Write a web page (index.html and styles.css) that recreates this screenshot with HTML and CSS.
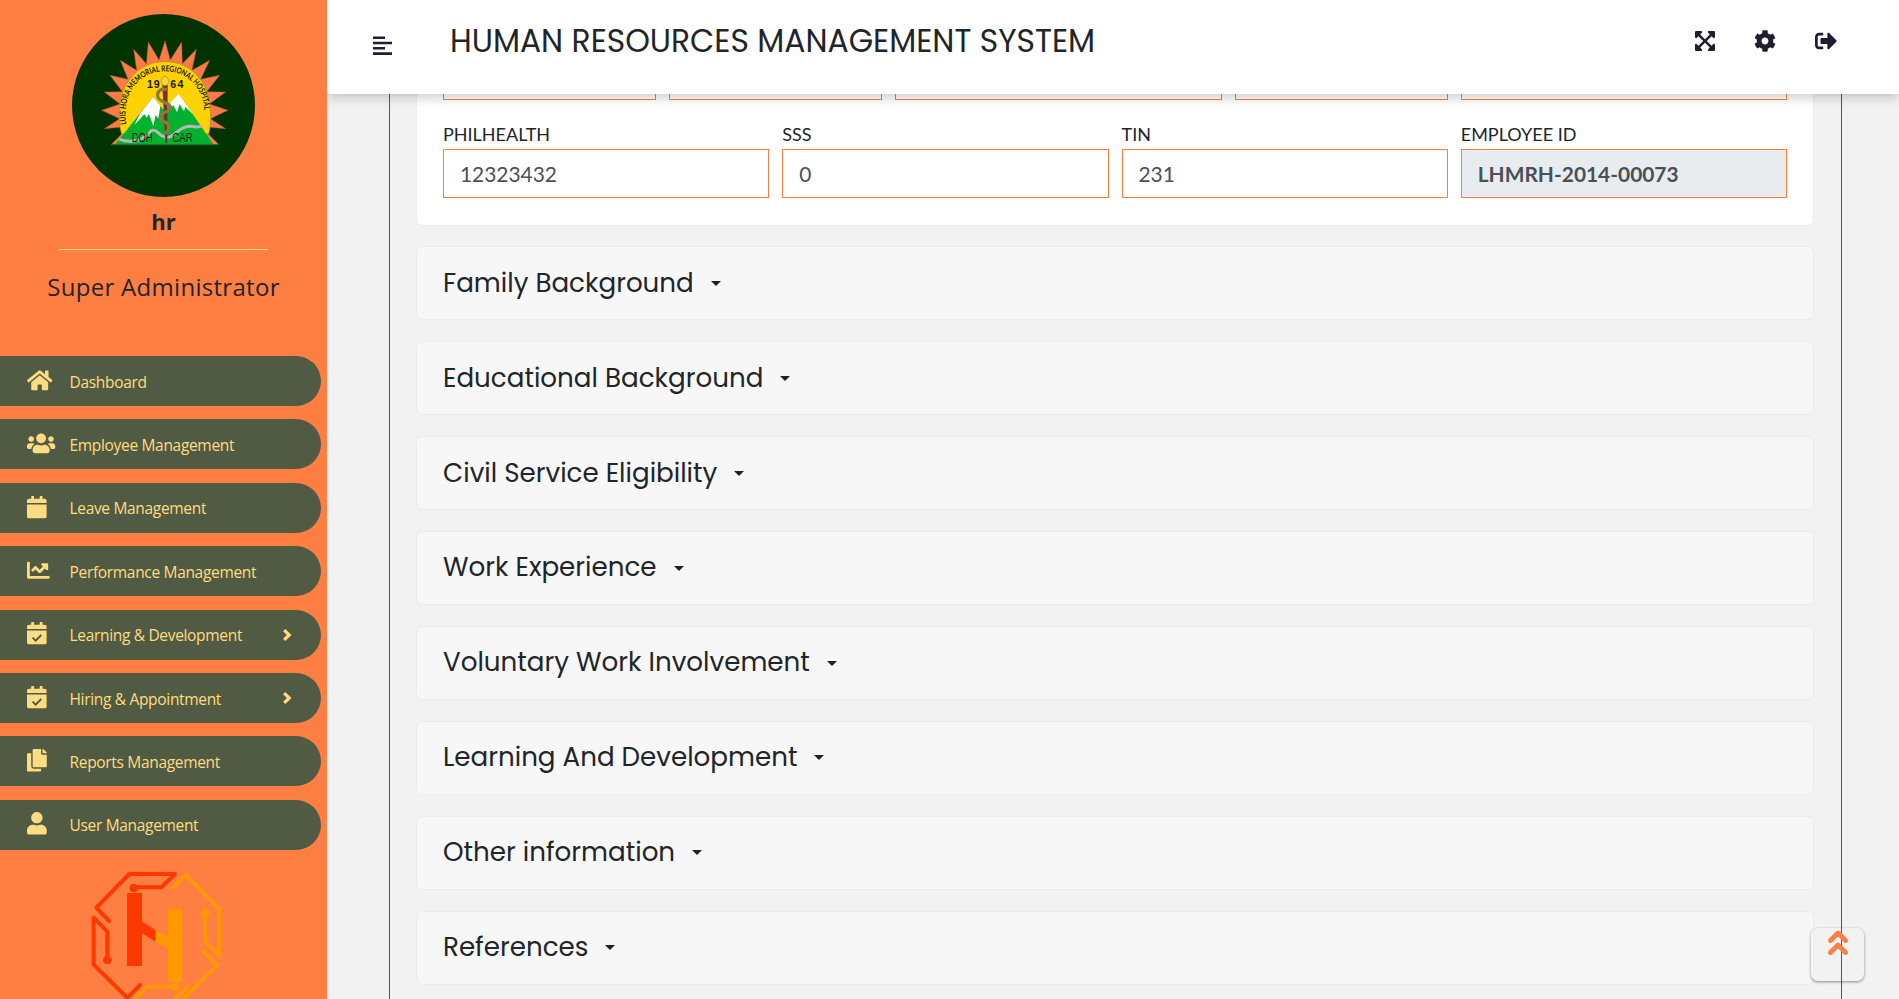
FILE: index.html
```html
<!DOCTYPE html>
<html lang="en">
<head>
<meta charset="utf-8">
<title>Human Resources Management System</title>
<link rel="stylesheet" href="styles.css">
</head>
<body>
<svg class="defs" width="0" height="0">
  <symbol id="i-calendar" viewBox="0 0 448 512"><path d="M12 192h424c6.600 0 12 5.400 12 12v260c0 26.500-21.500 48-48 48H48c-26.500 0-48-21.500-48-48V204c0-6.600 5.400-12 12-12zm436-44v-36c0-26.500-21.500-48-48-48h-48V12c0-6.600-5.400-12-12-12h-40c-6.600 0-12 5.400-12 12v52H160V12c0-6.600-5.400-12-12-12h-40c-6.600 0-12 5.400-12 12v52H48C21.500 64 0 85.500 0 112v36c0 6.600 5.400 12 12 12h424c6.600 0 12-5.400 12-12z"/></symbol>
  <symbol id="i-chevron" viewBox="0 0 10 14"><path d="M2.200 2.200 7.200 7l-5 4.800" fill="none" stroke="currentColor" stroke-width="3.200"/></symbol>
</svg>
<div class="app">
  <aside class="sidebar">
    <div class="profile">
      <svg class="seal" viewBox="216 42 549 549">
        <circle cx="490.500" cy="316.500" r="274.500" fill="#003300"/>
        <path d="M333 434 365 402 360 382 313 386 359 356 305 331 360 312 313 276 367 275 330 226 384 238 361 181 410 211 401 148 439 191 445 126 477 180 495 122 511 180 545 126 547 191 589 148 576 211 629 181 602 238 659 226 620 275 677 276 628 312 684 331 631 356 677 386 630 382 625 402 657 434Z" fill="#f97b4a" stroke="#a9552c" stroke-width="1.500"/>
        <path d="M365 402C355 370 357 335 360 312 370 240 420 185 495 185S620 240 629 312C633 345 633 375 626 402Z" fill="#ffd200" stroke="#92851c" stroke-width="1.500"/>
        <path d="M345 434 459 291 495 335 536 281 641 434Z" fill="#00b22d"/>
        <path d="M459 291 420 341 403 375 433 343 440 353 447 342 460 378 467 345 475 356 481 318ZM536 281 513 306 505 330 520 316 531 337 539 313 552 334 556 321 579 343Z" fill="#fff"/>
        <path d="M358 418C400 432 435 418 454 392 473 384 474 408 494 411 527 417 530 380 569 379 585 378 590 385 606 378" fill="none" stroke="#b8b8b8" stroke-width="9"/>
        <path d="M333 434H657" stroke="#08782d" stroke-width="3"/>
        <path d="M487 255H503L502 425 499 432 496 425Z" fill="#713037"/>
        <path d="M500 270C475 258 462 291 484 302 509 313 526 324 495 337 475 345 475 360 499 368 515 381 504 394 491 403" fill="none" stroke="#8a7a36" stroke-width="10"/>
        <ellipse cx="495" cy="243" rx="11" ry="14" fill="#f4d53b" stroke="#a48e13" stroke-width="2"/>
        <path id="arc" d="M379 373C364 281 417 214 495 214S626 281 611 373" fill="none"/>
        <text class="seal-arc"><textPath href="#arc" textLength="410" lengthAdjust="spacingAndGlyphs">LUIS HORA MEMORIAL REGIONAL HOSPITAL</textPath></text>
        <text class="seal-year" x="441" y="263" textLength="38">19</text>
        <text class="seal-year" x="511" y="263" textLength="39">64</text>
        <text class="seal-dept" x="395" y="425" textLength="63" lengthAdjust="spacingAndGlyphs">DOH</text>
        <text class="seal-dept" x="517" y="425" textLength="61" lengthAdjust="spacingAndGlyphs">CAR</text>
      </svg>
      <div class="user-name">hr</div>
      <div class="divider"></div>
      <div class="user-role">Super Administrator</div>
    </div>
    <nav class="menu">
      <a class="item"><svg class="icon" preserveAspectRatio="xMinYMid" viewBox="0 0 576 512"><path d="M280.370 148.260L96 300.110V464a16 16 0 0 0 16 16l112.060-.290a16 16 0 0 0 15.920-16V368a16 16 0 0 1 16-16h64a16 16 0 0 1 16 16v95.640a16 16 0 0 0 16 16.050L464 480a16 16 0 0 0 16-16V300L295.670 148.260a12.190 12.190 0 0 0-15.300 0zM571.600 251.470L488 182.560V44.050a12 12 0 0 0-12-12h-56a12 12 0 0 0-12 12v72.610L318.470 43a48 48 0 0 0-61 0L4.340 251.470a12 12 0 0 0-1.600 16.900l25.500 31A12 12 0 0 0 45.150 301l235.220-193.740a12.190 12.190 0 0 1 15.300 0L530.900 301a12 12 0 0 0 16.900-1.600l25.500-31a12 12 0 0 0-1.700-16.930z"/></svg><span>Dashboard</span></a>
      <a class="item"><svg class="icon" preserveAspectRatio="xMinYMid" viewBox="0 0 640 512"><path d="M96 224c35.300 0 64-28.700 64-64s-28.700-64-64-64-64 28.700-64 64 28.700 64 64 64zm448 0c35.300 0 64-28.700 64-64s-28.700-64-64-64-64 28.700-64 64 28.700 64 64 64zm32 32h-64c-17.600 0-33.500 7.100-45.100 18.600 40.300 22.100 68.900 62 75.100 109.400h66c17.700 0 32-14.300 32-32v-32c0-35.300-28.700-64-64-64zm-256 0c61.900 0 112-50.100 112-112S381.900 32 320 32 208 82.100 208 144s50.100 112 112 112zm76.800 32h-8.300c-20.800 10-43.900 16-68.500 16s-47.600-6-68.500-16h-8.300C179.600 288 128 339.600 128 403.200V432c0 26.500 21.500 48 48 48h288c26.500 0 48-21.500 48-48v-28.800c0-63.600-51.600-115.200-115.200-115.200zm-223.700-13.400C161.500 263.100 145.600 256 128 256H64c-35.300 0-64 28.700-64 64v32c0 17.700 14.300 32 32 32h65.900c6.300-47.400 34.900-87.300 75.200-109.400z"/></svg><span>Employee Management</span></a>
      <a class="item"><svg class="icon" preserveAspectRatio="xMinYMid" viewBox="0 0 448 512"><use href="#i-calendar" width="448" height="512"/></svg><span>Leave Management</span></a>
      <a class="item"><svg class="icon" preserveAspectRatio="xMinYMid" viewBox="0 0 512 512"><path d="M496 384H64V80c0-8.840-7.160-16-16-16H16C7.160 64 0 71.160 0 80v336c0 17.670 14.330 32 32 32h464c8.840 0 16-7.160 16-16v-32c0-8.840-7.160-16-16-16zM464 96H345.940c-21.380 0-32.090 25.850-16.970 40.970l32.400 32.400L288 242.750l-73.370-73.370c-12.500-12.500-32.760-12.500-45.250 0l-68.690 68.690c-6.250 6.250-6.250 16.380 0 22.630l22.620 22.620c6.250 6.250 16.380 6.250 22.630 0L192 237.250l73.370 73.370c12.500 12.500 32.760 12.500 45.250 0l96-96 32.400 32.400c15.120 15.120 40.970 4.410 40.970-16.970V112c.010-8.840-7.150-16-15.990-16z"/></svg><span>Performance Management</span></a>
      <a class="item"><svg class="icon" preserveAspectRatio="xMinYMid" viewBox="0 0 448 512"><use href="#i-calendar" width="448" height="512"/><path class="check" d="M126 354l70 68 128-128"/></svg><span>Learning &amp; Development</span><svg class="chevron"><use href="#i-chevron"/></svg></a>
      <a class="item"><svg class="icon" preserveAspectRatio="xMinYMid" viewBox="0 0 448 512"><use href="#i-calendar" width="448" height="512"/><path class="check" d="M126 354l70 68 128-128"/></svg><span>Hiring &amp; Appointment</span><svg class="chevron"><use href="#i-chevron"/></svg></a>
      <a class="item"><svg class="icon" preserveAspectRatio="xMinYMid" viewBox="0 0 448 512"><path d="M320 448v40c0 13.255-10.745 24-24 24H24c-13.255 0-24-10.745-24-24V120c0-13.255 10.745-24 24-24h72v296c0 30.879 25.121 56 56 56h168zm0-344V0H152c-13.255 0-24 10.745-24 24v368c0 13.255 10.745 24 24 24h272c13.255 0 24-10.745 24-24V128H344c-13.200 0-24-10.800-24-24zm120.971-31.029L375.029 7.029A24 24 0 0 0 358.059 0H352v96h96v-6.059a24 24 0 0 0-7.029-16.970z"/></svg><span>Reports Management</span></a>
      <a class="item"><svg class="icon" preserveAspectRatio="xMinYMid" viewBox="0 0 448 512"><path d="M224 256c70.700 0 128-57.300 128-128S294.700 0 224 0 96 57.300 96 128s57.300 128 128 128zm89.600 32h-16.700c-22.200 10.200-46.900 16-72.900 16s-50.600-5.800-72.900-16h-16.700C60.200 288 0 348.200 0 422.400V464c0 26.500 21.500 48 48 48h352c26.500 0 48-21.500 48-48v-41.600c0-74.200-60.200-134.400-134.400-134.400z"/></svg><span>User Management</span></a>
    </nav>
    <svg class="brand" viewBox="270 810 399 387">
      <g fill="none" stroke-width="12" stroke-linejoin="round" stroke-linecap="round">
        <g stroke="#ff3800">
          <path d="M327 963 289 923 388 822H525L484 862H401"/>
          <path d="M322 1080V995L281 953V1094L382 1194 420 1155"/>
        </g>
        <g stroke="#ff9900">
          <path d="M517 865 557 824 657 926V1066L615 1024V940"/>
          <path d="M611 1055 651 1096 550 1197M400 1201 442 1160H526M522 1201 564 1160"/>
        </g>
      </g>
      <path d="M381 879H426V965L467 990V1026L426 1000V1098H381Z" fill="#ff3800"/>
      <path d="M467 990 504 1011V926H547V1145H504V1047L467 1025Z" fill="#ff9900"/>
      <g fill="#ff3800"><circle cx="401" cy="864" r="13"/><circle cx="322" cy="1080" r="13"/></g>
      <g fill="#ff9900"><circle cx="615" cy="939" r="13"/><circle cx="526" cy="1160" r="13"/></g>
    </svg>
  </aside>

  <div class="page">
    <header class="topbar">
      <svg class="burger" viewBox="0 0 19 20"><path d="M0 1.700h12M0 7h19M0 12.300h12M0 17.600h19" stroke="currentColor" stroke-width="2.600"/></svg>
      <h1>HUMAN RESOURCES MANAGEMENT SYSTEM</h1>
      <div class="actions">
        <svg class="act-expand" viewBox="0 32 448 448"><path d="M448 344v112a23.940 23.940 0 0 1-24 24H312c-21.390 0-32.090-25.900-17-41l36.200-36.200L224 295.600 116.770 402.900 153 439c15.090 15.100 4.390 41-17 41H24a23.940 23.940 0 0 1-24-24V344c0-21.400 25.890-32.100 41-17l36.190 36.200L184.460 256 77.180 148.700 41 185c-15.100 15.100-41 4.400-41-17V56a23.940 23.940 0 0 1 24-24h112c21.390 0 32.090 25.900 17 41l-36.200 36.200L224 216.400l107.230-107.300L295 73c-15.090-15.100-4.390-41 17-41h112a23.940 23.940 0 0 1 24 24v112c0 21.400-25.890 32.100-41 17l-36.190-36.200L263.540 256l107.280 107.300L407 327.100c15.100-15.200 41-4.500 41 16.900z"/></svg>
        <svg class="act-cog" viewBox="0 0 512 512"><path d="M487.400 315.700l-42.600-24.600c4.300-23.200 4.300-47 0-70.200l42.600-24.600c4.900-2.800 7.100-8.600 5.500-14-11.100-35.600-30-67.800-54.700-94.600-3.800-4.100-10-5.100-14.800-2.300L380.800 110c-17.900-15.400-38.500-27.300-60.800-35.100V25.800c0-5.600-3.900-10.500-9.400-11.700-36.700-8.200-74.300-7.800-109.200 0-5.500 1.200-9.400 6.100-9.400 11.700V75c-22.200 7.900-42.800 19.800-60.800 35.100L88.700 85.500c-4.900-2.800-11-1.900-14.800 2.300-24.700 26.700-43.600 58.900-54.700 94.600-1.700 5.400.600 11.200 5.500 14L67.300 221c-4.300 23.200-4.300 47 0 70.200l-42.600 24.600c-4.900 2.800-7.100 8.600-5.500 14 11.100 35.600 30 67.800 54.700 94.600 3.800 4.100 10 5.100 14.800 2.300l42.600-24.600c17.900 15.400 38.500 27.300 60.800 35.100v49.200c0 5.600 3.900 10.500 9.400 11.700 36.700 8.200 74.300 7.800 109.200 0 5.500-1.200 9.400-6.100 9.400-11.700v-49.200c22.200-7.900 42.800-19.800 60.800-35.100l42.600 24.600c4.900 2.800 11 1.900 14.800-2.300 24.700-26.700 43.600-58.900 54.700-94.600 1.500-5.500-.700-11.300-5.600-14.100zM256 336c-44.100 0-80-35.900-80-80s35.900-80 80-80 80 35.900 80 80-35.900 80-80 80z"/></svg>
        <svg class="act-exit" viewBox="0 0 512 512"><path d="M497 273L329 441c-15 15-41 4.500-41-17v-96H152c-13.300 0-24-10.700-24-24v-96c0-13.300 10.700-24 24-24h136V88c0-21.400 25.900-32 41-17l168 168c9.300 9.400 9.300 24.600 0 34zM192 436v-40c0-6.600-5.400-12-12-12H96c-17.700 0-32-14.300-32-32V160c0-17.700 14.300-32 32-32h84c6.600 0 12-5.400 12-12V76c0-6.600-5.400-12-12-12H96c-53 0-96 43-96 96v192c0 53 43 96 96 96h84c6.600 0 12-5.400 12-12z"/></svg>
      </div>
    </header>

    <main class="sheet">
      <section class="card open">
        <div class="row-above"><i></i><i></i><i></i><i></i><i></i></div>
        <div class="fields">
          <label>PHILHEALTH<span class="input">12323432</span></label>
          <label>SSS<span class="input">0</span></label>
          <label>TIN<span class="input">231</span></label>
          <label>EMPLOYEE ID<span class="input readonly">LHMRH-2014-00073</span></label>
        </div>
      </section>
      <section class="card"><h2>Family Background</h2><b class="caret"></b></section>
      <section class="card"><h2>Educational Background</h2><b class="caret"></b></section>
      <section class="card"><h2>Civil Service Eligibility</h2><b class="caret"></b></section>
      <section class="card"><h2>Work Experience</h2><b class="caret"></b></section>
      <section class="card"><h2>Voluntary Work Involvement</h2><b class="caret"></b></section>
      <section class="card"><h2>Learning And Development</h2><b class="caret"></b></section>
      <section class="card"><h2>Other information</h2><b class="caret"></b></section>
      <section class="card"><h2>References</h2><b class="caret"></b></section>
    </main>
  </div>
  <a class="to-top"><svg viewBox="0 0 20 26"><path d="M2.500 10.500 10 3 17.500 10.500M2.500 22.500 10 15 17.500 22.500" fill="none" stroke="#ff7f43" stroke-width="4.800" stroke-linecap="round" stroke-linejoin="round"/></svg></a>
</div>
</body>
</html>
```
FILE: styles.css
```css
* { box-sizing: border-box; }
body { margin: 0; background: #f2f2f2; color: #212529; font-family: Poppins, Inter, sans-serif; overflow: hidden; }
.defs { position: absolute; }
.app { display: flex; height: 999px; overflow: hidden; }

/* Sidebar */
.sidebar { position: relative; z-index: 4; width: 327px; flex: none; background: #ff7f43; overflow: hidden; font-family: "Segoe UI", "Open Sans", sans-serif; }
.profile { height: 356px; padding-top: 14px; display: flex; flex-direction: column; align-items: center; }
.seal { width: 183px; height: 183px; flex: none; }
.seal text { fill: #16160c; }
.seal-arc { font: bold 25px Lato, sans-serif; }
.seal-year { font: bold 32px "Liberation Sans", sans-serif; }
.seal-dept { font: 37px "Liberation Sans", sans-serif; }
.user-name { margin-top: 9px; font-size: 22px; line-height: 30px; font-weight: 700; }
.divider { width: 209px; height: 1px; margin-top: 13px; background: #ffdc82; }
.user-role { margin-top: 19px; font-size: 24px; line-height: 36px; letter-spacing: 0.3px; white-space: nowrap; }
.menu { display: flex; flex-direction: column; gap: 13.3px; }
.item { display: flex; align-items: center; width: 321px; height: 50.100px; padding: 0 29px 0 27px; border-radius: 0 25px 25px 0; background: #515b43; color: #ffdc82; font-size: 15.500px; }
.icon { height: 22.600px; width: 42.500px; flex: none; fill: currentColor; margin-top: -2px; overflow: visible; }
.item span { flex: 1; white-space: nowrap; padding-top: 1px; letter-spacing: -0.32px; }
.chevron { width: 10px; height: 14px; }
.check { fill: none; stroke: #515b43; stroke-width: 44; }
.brand { display: block; width: 133px; height: 129px; margin: 20px 0 0 90px; }

/* Top bar */
.page { flex: 1; display: flex; flex-direction: column; min-width: 0; }
.topbar { position: relative; z-index: 2; display: flex; align-items: flex-start; height: 94px; flex: none; padding: 0 62px 0 46px; background: #fff; color: #1f1e2e; box-shadow: 0 3px 12px rgba(0, 0, 0, 0.22); }
.burger { width: 19px; height: 20px; margin-top: 36px; }
h1 { margin: 21px 0 0 58px; font-size: 31.400px; line-height: 40px; font-weight: 400; color: #212529; white-space: nowrap; }
.actions { display: flex; align-items: center; margin: 29px 0 0 auto; height: 24px; fill: currentColor; }
.act-expand { width: 20px; height: 20px; }
.act-cog { width: 22px; height: 22px; margin-left: 39px; }
.act-exit { width: 22px; height: 22px; margin-left: 39px; }

/* Record sheet */
.sheet { flex: 1; width: 1453px; margin-left: 62px; padding: 0 26px; border: solid #515b43; border-width: 0 1px; display: flex; flex-direction: column; gap: 20.900px; }
.card { flex: none; display: flex; align-items: center; width: 1398px; height: 74px; padding: 0 26px; border: 1px solid #ebebf0; border-radius: 6px; background: #f7f7f7; }
.card.open { display: block; height: 131.600px; border-top: 0; border-radius: 0 0 6px 6px; background: #fff; }
h2 { margin: 0 0 1.400px; font-size: 26.170px; line-height: 34px; font-weight: 400; white-space: nowrap; }
.caret { margin: 0 0 0 17px; border: solid transparent; border-width: 5px 5px 0; border-top-color: #1f1e2e; }
.row-above { display: grid; grid-template-columns: 213px 213px 327px 213px 326px; gap: 13px; height: 6px; }
.row-above i { border: 1px solid #f5803f; border-top: 0; }
.fields { display: grid; grid-template-columns: repeat(4, 1fr); gap: 13px; margin-top: 21px; }
label { font-family: Lato, sans-serif; font-size: 18px; line-height: 27px; }
.input { display: flex; align-items: center; height: 49px; margin-top: 1px; padding: 0 16px; border: 1px solid #f5803f; font-size: 20.900px; color: #495057; background: #fff; }
.readonly { background: #e9ecef; font-weight: 700; }

/* Back-to-top button floats above the page */
.to-top { position: absolute; left: 1811px; top: 928px; width: 53px; height: 53px; padding: 2px 0 0 17px; border-radius: 7px; box-shadow: 0 1px 3px rgba(0, 0, 0, 0.45); z-index: 3; }
.to-top svg { display: block; width: 20px; height: 26px; }
```
